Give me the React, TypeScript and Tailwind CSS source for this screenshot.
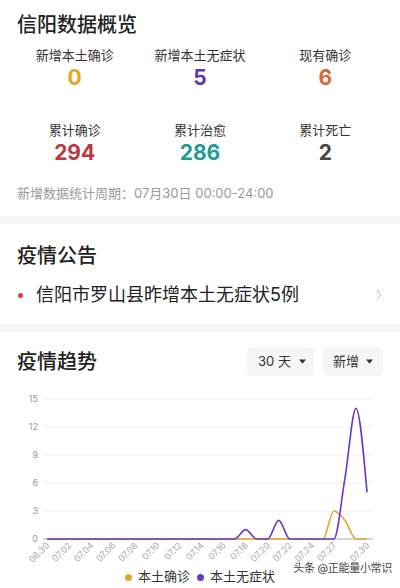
import React from 'react';
import { ChevronRight } from 'lucide-react';

// chart geometry (svg coordinates, svg starts at page y=380)
const X0 = 47;
const DX = 320 / 29;
const BASE = 159;
const UNIT = 28 / 3;
const px = (k: number) => X0 + k * DX;
const py = (v: number) => BASE - v * UNIT;

const zeros = () => Array.from({ length: 30 }, () => 0);

const local = zeros();
local[26] = 3;
local[27] = 2;

const silent = zeros();
silent[18] = 1;
silent[21] = 2;
silent[27] = 6.5;
silent[28] = 14;
silent[29] = 5;

const xLabels: [number, string][] = [
  [0, '06.30'],
  [2, '07.02'],
  [4, '07.04'],
  [6, '07.06'],
  [8, '07.08'],
  [10, '07.10'],
  [12, '07.12'],
  [14, '07.14'],
  [16, '07.16'],
  [18, '07.18'],
  [20, '07.20'],
  [22, '07.22'],
  [24, '07.24'],
  [26, '07.27'],
  [29, '07.30'],
];

// monotone cubic, same idea as d3 curveMonotoneX
function smoothPath(values: number[]) {
  const xs = values.map((_, i) => px(i));
  const ys = values.map((v) => py(v));
  const n = xs.length;
  const s: number[] = [];
  for (let i = 0; i < n - 1; i++) s.push((ys[i + 1] - ys[i]) / (xs[i + 1] - xs[i]));
  const t: number[] = new Array(n).fill(0);
  for (let i = 1; i < n - 1; i++) {
    const s0 = s[i - 1];
    const s1 = s[i];
    const p = (s0 + s1) / 2;
    t[i] = (Math.sign(s0) + Math.sign(s1)) * Math.min(Math.abs(s0), Math.abs(s1), 0.5 * Math.abs(p)) || 0;
  }
  t[0] = (3 * s[0] - t[1]) / 2;
  t[n - 1] = (3 * s[n - 2] - t[n - 2]) / 2;
  let d = `M${xs[0]},${ys[0]}`;
  for (let i = 0; i < n - 1; i++) {
    const h = (xs[i + 1] - xs[i]) / 3;
    d += ` C${xs[i] + h},${ys[i] + h * t[i]} ${xs[i + 1] - h},${ys[i + 1] - h * t[i + 1]} ${xs[i + 1]},${ys[i + 1]}`;
  }
  return d;
}

interface StatProps {
  label: string;
  value: string;
  color: string;
}

const Stat: React.FC<StatProps> = ({ label, value, color }) => (
  <div className="flex flex-col items-center">
    <div className="text-[13px] leading-5 text-[#333]">{label}</div>
    <div className={`text-[21px] leading-[26px] font-bold ${color}`}>{value}</div>
  </div>
);

const Caret = () => (
  <svg width="7" height="5" viewBox="0 0 7 5" className="fill-[#333]">
    <path d="M0 0.5h7L3.5 4.8z" />
  </svg>
);

const TrendChart = () => (
  <svg width="400" height="186" viewBox="0 0 400 186" className="block">
    {[3, 6, 9, 12, 15].map((v) => (
      <line key={v} x1="43" x2="373" y1={py(v)} y2={py(v)} stroke="#f0f0f0" strokeWidth="1" />
    ))}
    <line x1="43" x2="373" y1={BASE} y2={BASE} stroke="#aaa" strokeWidth="1" />
    {[0, 3, 6, 9, 12, 15].map((v) => (
      <text key={v} x="38" y={py(v) + 3} textAnchor="end" fontSize="9" fill="#999">
        {v}
      </text>
    ))}
    {xLabels.map(([k, lbl]) => (
      <text
        key={lbl}
        transform={`translate(${px(k) + 3},${BASE + 7}) rotate(-45)`}
        textAnchor="end"
        fontSize="9"
        fill="#aaa"
      >
        {lbl}
      </text>
    ))}
    <path d={smoothPath(local)} fill="none" stroke="#e3a72f" strokeWidth="1.6" />
    <path d={smoothPath(silent)} fill="none" stroke="#6a38c2" strokeWidth="1.6" />
  </svg>
);

export default function App() {
  return (
    <div className="w-[400px] h-[588px] overflow-hidden bg-white text-[#222] font-[Inter,'Noto_Sans_CJK_SC',sans-serif]">
      <section className="px-[17px] pt-[11px] pb-[13px]">
        <h1 className="text-[20px] leading-[28px] font-medium">信阳数据概览</h1>
        <div className="-mx-[5px] mt-[6px] grid grid-cols-3 gap-y-[29px]">
          <Stat label="新增本土确诊" value="0" color="text-[#e2a624]" />
          <Stat label="新增本土无症状" value="5" color="text-[#5d33b8]" />
          <Stat label="现有确诊" value="6" color="text-[#d2693a]" />
          <Stat label="累计确诊" value="294" color="text-[#b8393f]" />
          <Stat label="累计治愈" value="286" color="text-[#1e9b97]" />
          <Stat label="累计死亡" value="2" color="text-[#454545]" />
        </div>
        <p className="mt-[17px] text-[13px] leading-5 text-[#9a9a9a]">新增数据统计周期：07月30日 00:00-24:00</p>
      </section>

      <div className="h-2 bg-[#f5f5f5]" />

      <section className="px-[17px] pt-[18px] pb-[16px]">
        <h2 className="text-[20px] leading-[28px] font-medium">疫情公告</h2>
        <div className="mt-3 flex h-[26px] items-center">
          <span className="ml-[1px] h-[5px] w-[5px] rounded-full bg-[#d9413f]" />
          <span className="ml-[13px] text-[18px] leading-[26px] text-[#222]">信阳市罗山县昨增本土无症状5例</span>
          <ChevronRight size={16} strokeWidth={1.5} className="ml-auto -mr-1 text-[#bbb]" />
        </div>
      </section>

      <div className="h-2 bg-[#f5f5f5]" />

      <section className="pt-[15px]">
        <div className="flex h-[29px] items-center justify-between px-[17px]">
          <h2 className="text-[20px] leading-[28px] font-medium">疫情趋势</h2>
          <div className="flex gap-[9px]">
            <button className="flex h-[29px] w-[67px] items-center gap-[8px] rounded bg-[#f6f6f6] pl-[11px] text-[13px] text-[#333]">
              <span>30 天</span>
              <Caret />
            </button>
            <button className="flex h-[29px] w-[60px] items-center gap-[7px] rounded bg-[#f6f6f6] pl-[10px] text-[13px] text-[#333]">
              <span>新增</span>
              <Caret />
            </button>
          </div>
        </div>
        <div className="mt-1">
          <TrendChart />
        </div>
        <div className="relative flex h-[22px] items-center justify-center gap-[7px] text-[13px] text-[#333]">
          <div className="flex items-center gap-[6px]">
            <span className="h-[7px] w-[7px] rounded-full bg-[#e3a72f]" />
            <span>本土确诊</span>
          </div>
          <div className="flex items-center gap-[6px]">
            <span className="h-[7px] w-[7px] rounded-full bg-[#6a38c2]" />
            <span>本土无症状</span>
          </div>
          <span className="absolute right-[8px] top-[-6px] text-[11px] tracking-[-0.3px] text-[#444]">头条 @正能量小常识</span>
        </div>
      </section>
    </div>
  );
}
